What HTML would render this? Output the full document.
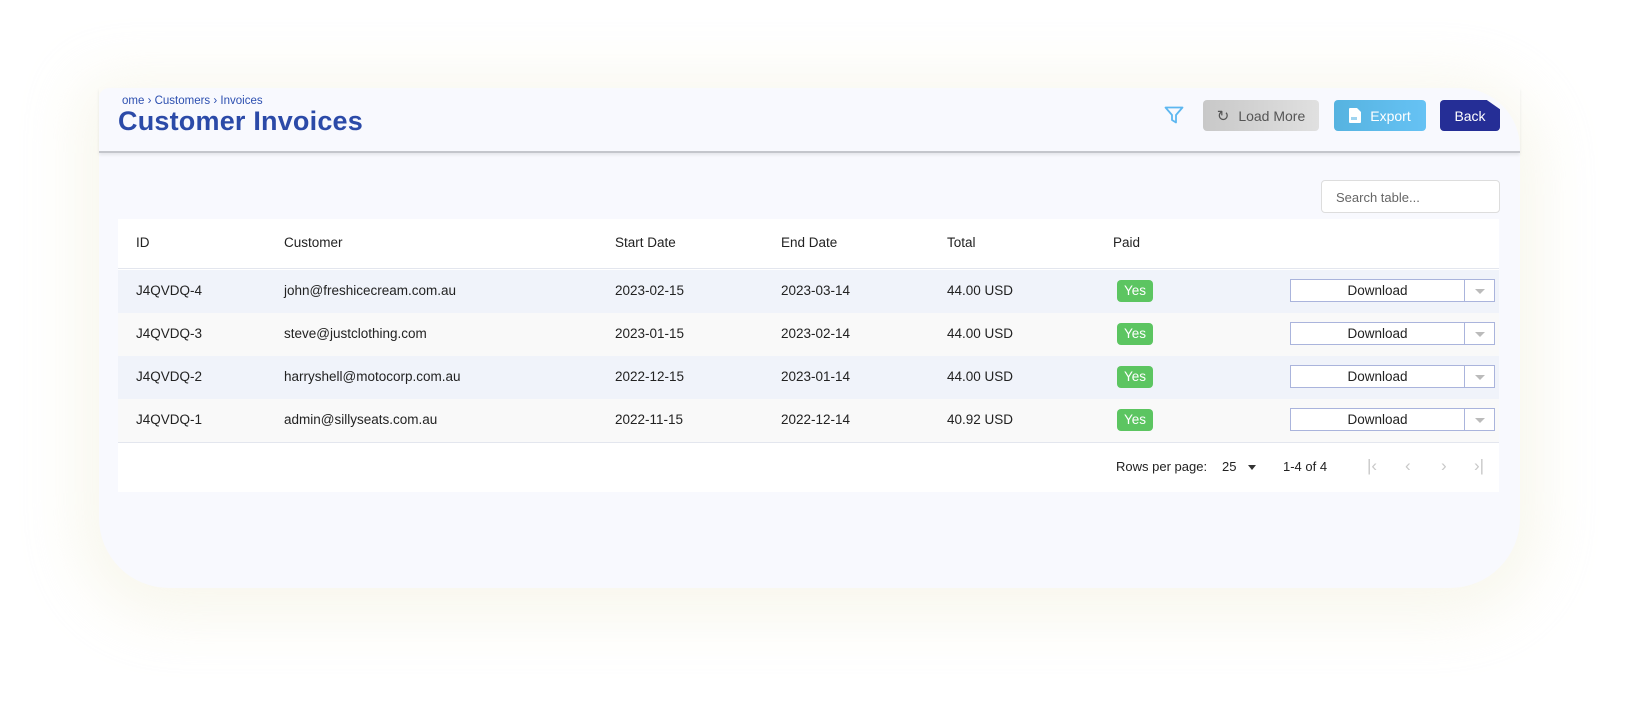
<!DOCTYPE html>
<html><head><meta charset="utf-8"><style>
*{box-sizing:border-box;margin:0;padding:0}
body{width:1649px;height:722px;background:#fff;font-family:"Liberation Sans",sans-serif;position:relative;overflow:hidden;color:#222}
.card{position:absolute;left:99px;top:88px;width:1421px;height:500px;background:#f8f9fe;border-radius:10px 60px 70px 70px;box-shadow:0 10px 60px 20px rgba(240,238,215,.45)}
.hdr{position:absolute;left:99px;top:88px;width:1421px;height:65px;border-bottom:2px solid #c4c6cc;box-shadow:0 2px 3px rgba(0,0,0,.08)}
.bc{position:absolute;left:122px;top:95px;font-size:11.5px;color:#2c4fb0}
.title{position:absolute;left:118px;top:106px;font-size:27px;font-weight:bold;color:#2b4aa8;letter-spacing:.2px}
.btn{position:absolute;top:100px;height:31px;border-radius:4px;font-size:14px;display:flex;align-items:center;justify-content:center}
.lm{left:1203px;width:116px;background:linear-gradient(90deg,#c8c8c8,#e0e0e0);color:#555}
.ex{left:1334px;width:92px;background:linear-gradient(90deg,#56b3e0,#66c2f4);color:#fff}
.bk{left:1440px;width:60px;background:#252e96;color:#fff;clip-path:polygon(0 0,78% 0,100% 30%,100% 100%,0 100%)}
.search{position:absolute;left:1321px;top:180px;width:179px;height:33px;background:#fff;border:1px solid #ddd;border-radius:4px;font-size:13px;color:#666;padding:9px 14px}
.tbl{position:absolute;left:118px;top:219px;width:1381px;height:273px;background:#fff}
.row{position:absolute;left:0;width:1381px;height:43px;font-size:13.5px}
.row span{position:absolute;top:13px}
.yes{position:absolute;left:999px;top:10px;width:36px;height:22px;background:#5cc561;color:#fff;border-radius:4px;font-size:13.5px;text-align:center;line-height:22px}
.dl{position:absolute;left:1172px;top:9px;width:205px;height:23px;border:1px solid #aab4dc;background:#fff;font-size:13.5px}
.dl b{font-weight:normal;position:absolute;left:0;width:173px;text-align:center;top:3px}
.dl i{position:absolute;left:173px;top:0;width:1px;height:21px;background:#aab4dc}
.dl em{position:absolute;left:184px;top:9px;border:5px solid transparent;border-top:5px solid #bbb;border-bottom:0}
.pg{color:#c8c8c8;font-size:17px}
</style></head><body>
<div class="card"></div>
<div class="hdr"></div>
<div class="bc">ome › Customers › Invoices</div>
<div class="title">Customer Invoices</div>
<svg style="position:absolute;left:1164px;top:106px" width="20" height="18" viewBox="0 0 20 18"><path d="M1.5 1.5h17l-6.5 7.5v7.5l-4-2.5v-5z" fill="none" stroke="#5db7f0" stroke-width="1.8" stroke-linejoin="round"/></svg>
<div class="btn lm"><span style="margin-right:9px;font-size:15px">↻</span>Load More</div>
<div class="btn ex"><svg width="12" height="15" viewBox="0 0 12 15" style="margin-right:9px"><path d="M0 1a1 1 0 011-1h7l4 4v10a1 1 0 01-1 1H1a1 1 0 01-1-1z" fill="#fff"/><rect x="2" y="9" width="6" height="3" fill="#9fd4f0"/></svg>Export</div>
<div class="btn bk">Back</div>
<div class="search">Search table...</div>
<div class="tbl">
<div class="row" style="top:0;height:50px;border-bottom:1px solid #e3e6ee"><span style="left:18px;top:16px">ID</span><span style="left:166px;top:16px">Customer</span><span style="left:497px;top:16px">Start Date</span><span style="left:663px;top:16px">End Date</span><span style="left:829px;top:16px">Total</span><span style="left:995px;top:16px">Paid</span></div>
<div class="row" style="top:51px;background:#f0f3fa"><span style="left:18px">J4QVDQ-4</span><span style="left:166px">john@freshicecream.com.au</span><span style="left:497px">2023-02-15</span><span style="left:663px">2023-03-14</span><span style="left:829px">44.00 USD</span><div class="yes">Yes</div><div class="dl"><b>Download</b><i></i><em></em></div></div>
<div class="row" style="top:94px;background:#f9f9f9"><span style="left:18px">J4QVDQ-3</span><span style="left:166px">steve@justclothing.com</span><span style="left:497px">2023-01-15</span><span style="left:663px">2023-02-14</span><span style="left:829px">44.00 USD</span><div class="yes">Yes</div><div class="dl"><b>Download</b><i></i><em></em></div></div>
<div class="row" style="top:137px;background:#f0f3fa"><span style="left:18px">J4QVDQ-2</span><span style="left:166px">harryshell@motocorp.com.au</span><span style="left:497px">2022-12-15</span><span style="left:663px">2023-01-14</span><span style="left:829px">44.00 USD</span><div class="yes">Yes</div><div class="dl"><b>Download</b><i></i><em></em></div></div>
<div class="row" style="top:180px;background:#f9f9f9;border-bottom:1px solid #e3e6ee;height:44px"><span style="left:18px">J4QVDQ-1</span><span style="left:166px">admin@sillyseats.com.au</span><span style="left:497px">2022-11-15</span><span style="left:663px">2022-12-14</span><span style="left:829px">40.92 USD</span><div class="yes">Yes</div><div class="dl"><b>Download</b><i></i><em></em></div></div>
<div class="row" style="top:224px;height:49px;font-size:13px"><span style="left:998px;top:16px">Rows per page:</span><span style="left:1104px;top:16px">25</span><span style="left:1130px;top:22px;border:4px solid transparent;border-top:5px solid #333;border-bottom:0"></span><span style="left:1165px;top:16px">1-4 of 4</span>
<span class="pg" style="left:1249px;top:13px">|‹</span><span class="pg" style="left:1287px;top:13px">‹</span><span class="pg" style="left:1323px;top:13px">›</span><span class="pg" style="left:1356px;top:13px">›|</span></div>
</div>
</body></html>
